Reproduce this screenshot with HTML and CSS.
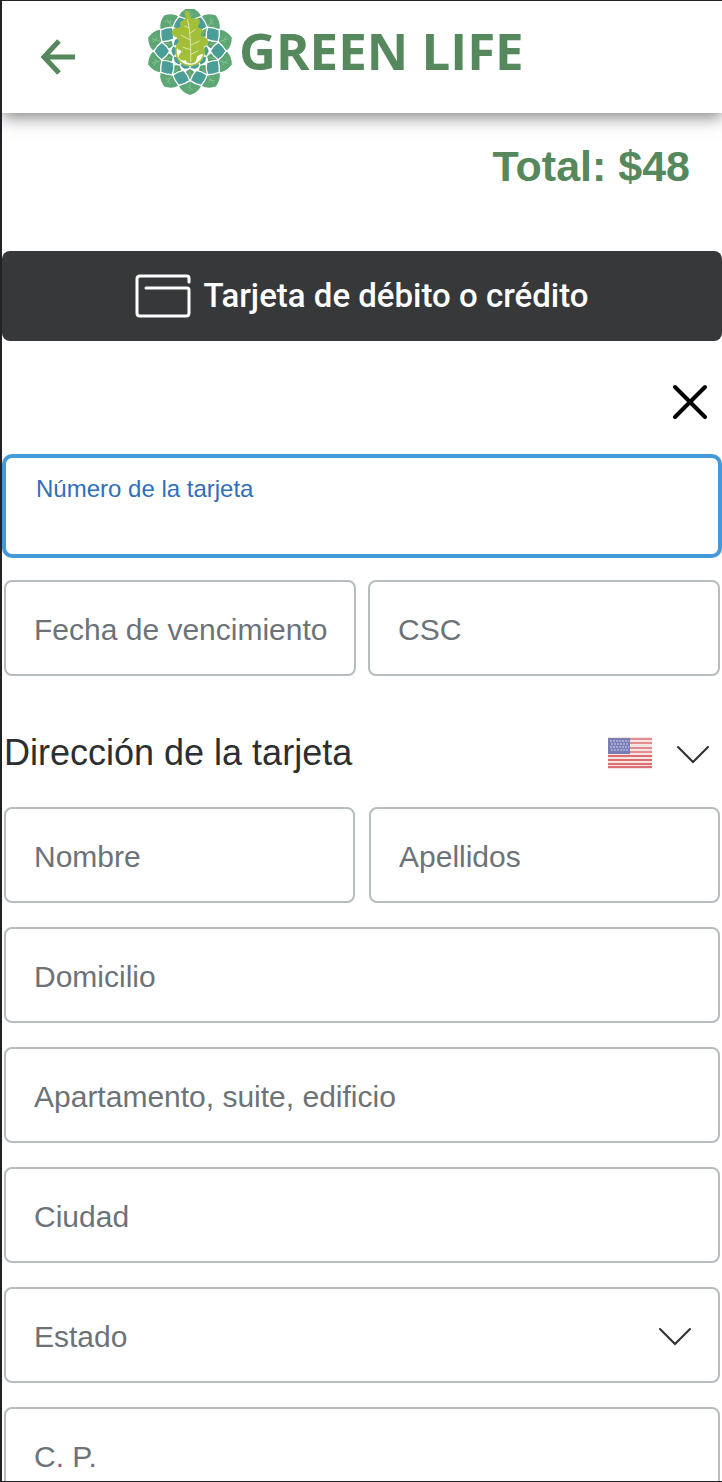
FILE: index.html
```html
<!DOCTYPE html>
<html lang="es">
<head>
<meta charset="utf-8">
<meta name="viewport" content="width=device-width, initial-scale=1">
<title>Green Life</title>
<link rel="stylesheet" href="styles.css">
</head>
<body>
<div class="screen">
  <header class="topbar">
    <button class="icon-button" type="button" aria-label="Volver">
      <svg class="back-icon" viewBox="0 0 36 36" aria-hidden="true"><path d="M35 18H4M19 2 4 18l15 16"/></svg>
    </button>
    <a class="brand" href="#">
      <svg class="logo" viewBox="22 24 260 262" aria-hidden="true">
        <defs>
          <g id="spoke">
            <path fill="#5ca774" d="M0-134Q24-126 33-108Q20-94 0-90Q-20-94-33-108Q-24-126 0-134Z"/>
            <path fill="#57a06b" d="M0-86Q13-82 20-72Q12-60 0-55Q-12-60-20-72Q-13-82 0-86Z"/>
            <path fill="none" stroke="#8fc69d" stroke-width="2" d="M0-94V-122M0-110l-9-8M0-104l9-8M0-60V-80"/>
          </g>
          <g id="spoke-teal" transform="rotate(18)">
            <path fill="#4b9d98" stroke="#fff" stroke-width="4" d="M0-110Q17-100 27-86Q16-70 0-62Q-16-70-27-86Q-17-100 0-110Z"/>
            <path fill="#4b9d98" d="M0-57Q10-54 15-49L0-37L-15-49Q-10-54 0-57Z"/>
          </g>
        </defs>
        <g transform="translate(152 152)">
          <use href="#spoke"/><use href="#spoke" transform="rotate(36)"/><use href="#spoke" transform="rotate(72)"/><use href="#spoke" transform="rotate(108)"/><use href="#spoke" transform="rotate(144)"/><use href="#spoke" transform="rotate(180)"/><use href="#spoke" transform="rotate(216)"/><use href="#spoke" transform="rotate(252)"/><use href="#spoke" transform="rotate(288)"/><use href="#spoke" transform="rotate(324)"/>
          <use href="#spoke-teal"/><use href="#spoke-teal" transform="rotate(36)"/><use href="#spoke-teal" transform="rotate(72)"/><use href="#spoke-teal" transform="rotate(108)"/><use href="#spoke-teal" transform="rotate(144)"/><use href="#spoke-teal" transform="rotate(180)"/><use href="#spoke-teal" transform="rotate(216)"/><use href="#spoke-teal" transform="rotate(252)"/><use href="#spoke-teal" transform="rotate(288)"/><use href="#spoke-teal" transform="rotate(324)"/>
        </g>
        <circle cx="152" cy="153" r="43" fill="#fff" stroke="#a5c13e" stroke-width="5"/>
        <path fill="#a3bf3a" d="M137 31Q145 27 149 34Q149 46 157 54Q165 51 174 54Q186 58 181 68Q174 77 177 80Q193 84 190 94Q183 104 185 108Q205 108 208 124Q210 132 197 137Q190 143 198 151Q200 160 186 162Q172 165 172 178Q168 190 155 190Q142 190 139 180Q125 184 119 174Q114 166 126 156Q127 149 117 148Q108 141 117 132Q122 122 113 116Q115 108 98 103Q92 88 108 82Q121 81 124 76Q117 61 132 58Q140 54 138 44Q134 38 137 31Z"/>
        <path fill="none" stroke="#dce7a6" stroke-width="3" stroke-linecap="round" d="M145 56Q156 110 154 184M149 82l-12-6M152 98l16-12M153 118l-28-14M154 134l26-12M154 148l-22-7M155 162l22-11"/>
      </svg>
      <span class="brand-name">GREEN LIFE</span>
    </a>
  </header>

  <main class="checkout">
    <p class="total">Total: $48</p>

    <button class="pay-button" type="button">
      <svg class="card-icon" viewBox="0 0 56 46" aria-hidden="true"><path d="M54 9V5Q54 3 52 3H5Q2 3 2 6V40Q2 43 5 43H51Q54 43 54 40V17Q54 15 52 15H11"/></svg>
      <span>Tarjeta de débito o crédito</span>
    </button>

    <form class="card-form">
      <div class="close-row">
        <button class="icon-button" type="button" aria-label="Cerrar">
          <svg class="close-icon" viewBox="0 0 36 36" aria-hidden="true"><path d="M3 3 33 33M33 3 3 33"/></svg>
        </button>
      </div>

      <div class="fields">
        <div class="field field-active">
          <label for="card">Número de la tarjeta</label>
          <input id="card" type="text" inputmode="numeric">
        </div>
        <div class="field-pair">
          <div class="field"><label for="expiry">Fecha de vencimiento</label><input id="expiry" type="text"></div>
          <div class="field"><label for="csc">CSC</label><input id="csc" type="text"></div>
        </div>
      </div>

      <div class="address-head">
        <h2>Dirección de la tarjeta</h2>
        <button class="country" type="button" aria-label="País: Estados Unidos">
          <svg class="flag" viewBox="0 0 44 32" aria-hidden="true">
            <path fill="#f6e3e3" d="M0 0h44v32H0z"/>
            <path stroke="#e58c8e" stroke-width="2" d="M0 2h44M0 6h44M0 11h44M0 15h44"/>
            <path stroke="#dc6e70" stroke-width="2" d="M0 19h44M0 23h44M0 27h44M0 30h44"/>
            <path fill="#7a7eb4" d="M0 1h22v16H0z"/>
            <path stroke="#a3a9d0" stroke-width="2" stroke-dasharray="2 1" d="M2 4h19M3 7h18M2 10h19M3 13h18"/>
          </svg>
          <svg class="chevron" viewBox="0 0 32 22" aria-hidden="true"><path d="M1 5 16 20 31 5"/></svg>
        </button>
      </div>

      <div class="fields">
        <div class="field-pair field-pair-wide">
          <div class="field"><label for="name">Nombre</label><input id="name" type="text"></div>
          <div class="field"><label for="surname">Apellidos</label><input id="surname" type="text"></div>
        </div>
        <div class="field"><label for="street">Domicilio</label><input id="street" type="text"></div>
        <div class="field"><label for="unit">Apartamento, suite, edificio</label><input id="unit" type="text"></div>
        <div class="field"><label for="city">Ciudad</label><input id="city" type="text"></div>
        <div class="field">
          <label for="state">Estado</label>
          <select id="state"><option value=""></option></select>
          <svg class="chevron select-chevron" viewBox="0 0 32 22" aria-hidden="true"><path d="M1 5 16 20 31 5"/></svg>
        </div>
        <div class="field"><label for="zip">C. P.</label><input id="zip" type="text"></div>
      </div>
    </form>
  </main>
</div>
</body>
</html>
```

FILE: styles.css
```css
* {
  box-sizing: border-box;
}

body {
  margin: 0;
  background: #fff;
  color: #2c2e2f;
  font-family: "Liberation Sans", Arial, sans-serif;
}

button {
  margin: 0;
  padding: 0;
  border: 0;
  background: none;
  color: inherit;
  font: inherit;
  cursor: pointer;
}

svg {
  display: block;
  flex: none;
}

.screen {
  height: 100vh;
  overflow: hidden;
  border: solid #222126;
  border-width: 1px 0 1px 2px;
}

.topbar {
  display: flex;
  align-items: center;
  gap: 71px;
  height: 112px;
  padding-left: 38px;
  box-shadow: 0 4px 16px rgba(0, 0, 0, 0.5);
}

.back-icon {
  width: 36px;
  height: 36px;
  fill: none;
  stroke: #55885c;
  stroke-width: 5;
}

.brand {
  display: flex;
  align-items: center;
  gap: 6px;
  padding-bottom: 10px;
  color: #55885c;
  text-decoration: none;
}

.logo {
  width: 86px;
  height: 86px;
}

.brand-name {
  padding-bottom: 4px;
  font: 700 51px/68px "Open Sans", sans-serif;
}

.total {
  margin: 0;
  padding: 28px 32px 60px;
  color: #55885c;
  font-size: 43px;
  font-weight: 700;
  line-height: 50px;
  text-align: right;
}

.pay-button {
  display: flex;
  align-items: center;
  justify-content: center;
  gap: 12px;
  width: 100%;
  height: 90px;
  border-radius: 8px;
  background: #373839;
  color: #fff;
  font: 500 33px/40px Roboto, sans-serif;
}

.card-icon {
  width: 56px;
  height: 46px;
  fill: none;
  stroke: #fff;
  stroke-width: 3;
  stroke-linecap: round;
}

.card-form {
  padding: 0 2px;
}

.close-row {
  display: flex;
  justify-content: flex-end;
  padding: 43px 12px 36px;
}

.close-icon {
  width: 36px;
  height: 36px;
  fill: none;
  stroke: #000;
  stroke-width: 4;
  stroke-linecap: round;
}

.fields {
  display: grid;
  gap: 24px;
}

.field-pair {
  display: grid;
  grid-template-columns: 1fr 1fr;
  gap: 12px;
}

.field-pair-wide {
  gap: 14px;
}

.field {
  display: grid;
  align-items: center;
  min-width: 0;
}

.field > * {
  grid-area: 1 / 1;
}

.field label {
  z-index: 1;
  justify-self: start;
  padding: 4px 0 0 30px;
  color: #6c7378;
  font-size: 30px;
  line-height: 36px;
  pointer-events: none;
}

.field input,
.field select {
  width: 100%;
  height: 96px;
  margin: 0;
  padding: 0 28px;
  border: 2px solid #b7bcbf;
  border-radius: 8px;
  outline: 0;
  background: #fff;
  color: #2c2e2f;
  font: 30px/36px "Liberation Sans", Arial, sans-serif;
  appearance: none;
}

.field-active label {
  align-self: start;
  padding: 18px 0 0 32px;
  color: #306fba;
  font-size: 24px;
  line-height: 30px;
}

.field-active input {
  height: 100px;
  padding-top: 36px;
  border-color: #449ad9;
  box-shadow: 0 0 0 2px #449ad9;
}

.address-head {
  display: flex;
  align-items: center;
  justify-content: space-between;
  padding: 53px 11px 30px 0;
}

.address-head h2 {
  margin: 0;
  font-size: 36px;
  font-weight: 400;
  line-height: 48px;
}

.country {
  display: flex;
  align-items: center;
  gap: 25px;
}

.flag {
  width: 44px;
  height: 32px;
}

.chevron {
  width: 32px;
  height: 22px;
  fill: none;
  stroke: #2c2e2f;
  stroke-width: 2;
  stroke-linecap: round;
}

.select-chevron {
  z-index: 1;
  justify-self: end;
  margin-right: 29px;
  pointer-events: none;
}
```
